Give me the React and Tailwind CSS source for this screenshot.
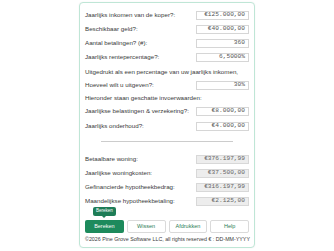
const INPUTS = [
  { label: 'Jaarlijks inkomen van de koper?:', value: '€125.000,00' },
  { label: 'Beschikbaar geld?:', value: '€40.000,00' },
  { label: 'Aantal betalingen? (#):', value: '360' },
  { label: 'Jaarlijks rentepercentage?:', value: '6,5000%' },
];

const ESTIMATES = [
  { label: 'Jaarlijkse belastingen & verzekering?:', value: '€8.000,00' },
  { label: 'Jaarlijks onderhoud?:', value: '€4.000,00' },
];

const RESULTS = [
  { label: 'Betaalbare woning:', value: '€376.197,99' },
  { label: 'Jaarlijkse woningkosten:', value: '€37.500,00' },
  { label: 'Gefinancierde hypotheekbedrag:', value: '€316.197,99' },
  { label: 'Maandelijkse hypotheekbetaling:', value: '€2.125,00' },
];

function Field({ value, readOnly }) {
  return (
    <div
      className={`w-[53px] h-[9px] flex items-center justify-end pr-[3px] border text-[6.2px] leading-none font-['Liberation_Mono',monospace] ${
        readOnly ? 'bg-[#ededed] border-[#d8d8d8] text-[#666]' : 'bg-white border-[#d6d6d6] text-[#555]'
      }`}
    >
      {value}
    </div>
  );
}

function Row({ label, value, readOnly, className = '' }) {
  return (
    <div className={`flex items-center justify-between h-[14px] ${className}`}>
      <span>{label}</span>
      <Field value={value} readOnly={readOnly} />
    </div>
  );
}

export default function App() {
  return (
    <div className="w-[334px] h-[251px] bg-white font-['Liberation_Sans',Arial,sans-serif]">
      <div className="mx-auto mt-[2px] w-[176px] h-[246px] border border-[#bfe6d6] rounded-[4px] bg-white shadow-[0_0_2px_rgba(0,0,0,0.06)] px-[5px] pt-[5px] text-[6.2px] text-[#3a3a3a] leading-none flex flex-col">
        {INPUTS.map((r) => (
          <Row key={r.label} {...r} />
        ))}
        <div className="h-[14px] flex items-center mt-[1px]">
          Uitgedrukt als een percentage van uw jaarlijks inkomen,
        </div>
        <Row label="Hoeveel wilt u uitgeven?:" value="30%" className="-mt-[1px]" />
        <div className="h-[12px] flex items-center">Hieronder staan geschatte invoerwaarden:</div>
        {ESTIMATES.map((r) => (
          <Row key={r.label} {...r} className="h-[15px]" />
        ))}
        <div className="mx-auto mt-[7px] mb-[10px] w-[132px] border-t border-[#cccccc]" />
        {RESULTS.map((r) => (
          <Row key={r.label} {...r} readOnly className="h-[14.5px]" />
        ))}
        <div className="relative mt-[12px] grid grid-cols-4 gap-[3px] text-[5.5px]">
          <div className="absolute -top-[13px] left-[8px] bg-[#1e7d57] text-white text-[4.5px] rounded-[2px] px-[3px] h-[9px] flex items-center">
            Bereken
            <span className="absolute left-1/2 -translate-x-1/2 top-full w-0 h-0 border-x-[2px] border-x-transparent border-t-[2px] border-t-[#1e7d57]" />
          </div>
          <button className="h-[13px] rounded-[2px] bg-[#1d8a5c] text-white">Bereken</button>
          <button className="h-[13px] rounded-[2px] bg-white border border-[#dadada] text-[#2b7d55]">Wissen</button>
          <button className="h-[13px] rounded-[2px] bg-white border border-[#dadada] text-[#2b7d55]">Afdrukken</button>
          <button className="h-[13px] rounded-[2px] bg-white border border-[#dadada] text-[#2b7d55]">Help</button>
        </div>
        <div className="mt-[4px] text-[5.3px] text-[#3a3a3a] whitespace-nowrap">
          ©2026 Pine Grove Software LLC, all rights reserved € : DD-MM-YYYY
        </div>
      </div>
    </div>
  );
}
